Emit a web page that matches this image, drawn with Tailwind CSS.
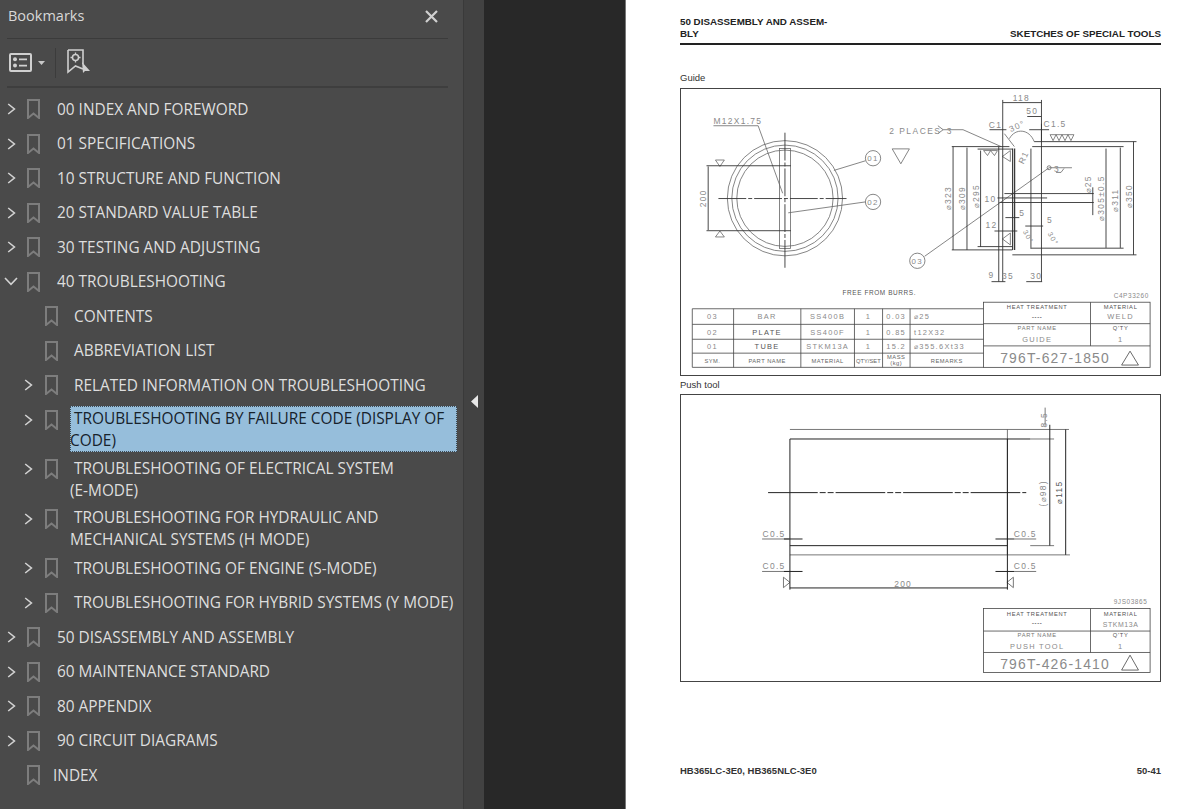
<!DOCTYPE html>
<html lang="en">
<head>
  <meta charset="UTF-8" />
  <title>Bookmarks</title>
  <script src="https://cdn.jsdelivr.net/npm/@tailwindcss/browser@4"></script>
</head>
<body class="w-[1200px] h-[809px] overflow-hidden bg-[#282828]">
  <!-- icon defs -->
  <svg class="hidden">
    <symbol id="mark" viewBox="0 0 13 20"><path d="M1 1H12V19L6.5 14.5L1 19Z" fill="none" stroke="#7d7d7d" stroke-width="2"/></symbol>
    <symbol id="chev" viewBox="0 0 9 12"><path d="M1.2 1L7.4 6L1.2 11" fill="none" stroke="#d2d2d2" stroke-width="1.6"/></symbol>
  </svg>

  <div class="flex h-full">
    <!-- Bookmarks panel -->
    <aside class="w-[463px] h-full bg-[#4a4a4a] text-[#dedede] font-['Open_Sans','Noto_Sans',sans-serif] text-[15.4px] shrink-0">
      <div class="ml-[7px] mr-[15px] h-[39px] border-b border-[#3b3b3b] flex items-center justify-between">
        <span class="ml-px -mt-[7px] text-[14.5px] text-[#d8d8d8]">Bookmarks</span>
        <svg class="w-[13px] h-[13px] mr-[10px] -mt-[6px]" viewBox="0 0 13 13"><path d="M1 1L12 12M12 1L1 12" stroke="#d0d0d0" stroke-width="2.2"/></svg>
      </div>
      <div class="ml-[7px] mr-[15px] h-[49px] border-b-2 border-[#3e3e3e] flex items-center">
        <svg class="w-[23px] h-[19px] ml-[2px]" viewBox="0 0 23 19"><rect x="1" y="1" width="21" height="17" rx="1" fill="none" stroke="#d0d0d0" stroke-width="2"/><circle cx="6" cy="6.3" r="2" fill="#d0d0d0"/><circle cx="6" cy="12.6" r="2" fill="#d0d0d0"/><path d="M10 6.3H18M10 12.6H18" stroke="#d0d0d0" stroke-width="1.8"/></svg>
        <svg class="w-[7px] h-[4px] ml-[6px]" viewBox="0 0 7 4"><path d="M0 0H7L3.5 4Z" fill="#c8c8c8"/></svg>
        <div class="w-px h-[30px] bg-[#3c3c3c] ml-[10px]"></div>
        <svg class="w-[23px] h-[25px] ml-[11px] -mt-[3px]" viewBox="0 0 23 25"><path d="M1 1H16V15M16 20L8.5 17L1 23V1" fill="none" stroke="#cfcfcf" stroke-width="1.6"/><circle cx="8.5" cy="8.5" r="3" fill="none" stroke="#cfcfcf" stroke-width="1.5"/><path d="M8.5 3.5V5M8.5 12V13.5M3.5 8.5H5M12 8.5H13.5" stroke="#cfcfcf" stroke-width="1.3"/><path d="M15 13L23 22H18L16 24Z" fill="#cfcfcf"/></svg>
      </div>

      <!-- tree -->
      <ul class="pt-[4px]">
        <li class="flex h-[34.5px] items-center"><svg class="w-[9px] h-[12px] ml-[7px]"><use href="#chev"/></svg><svg class="w-[13px] h-[20px] ml-[11px]"><use href="#mark"/></svg><span class="ml-[13px] pl-1">00 INDEX AND FOREWORD</span></li>
        <li class="flex h-[34.5px] items-center"><svg class="w-[9px] h-[12px] ml-[7px]"><use href="#chev"/></svg><svg class="w-[13px] h-[20px] ml-[11px]"><use href="#mark"/></svg><span class="ml-[13px] pl-1">01 SPECIFICATIONS</span></li>
        <li class="flex h-[34.5px] items-center"><svg class="w-[9px] h-[12px] ml-[7px]"><use href="#chev"/></svg><svg class="w-[13px] h-[20px] ml-[11px]"><use href="#mark"/></svg><span class="ml-[13px] pl-1">10 STRUCTURE AND FUNCTION</span></li>
        <li class="flex h-[34.5px] items-center"><svg class="w-[9px] h-[12px] ml-[7px]"><use href="#chev"/></svg><svg class="w-[13px] h-[20px] ml-[11px]"><use href="#mark"/></svg><span class="ml-[13px] pl-1">20 STANDARD VALUE TABLE</span></li>
        <li class="flex h-[34.5px] items-center"><svg class="w-[9px] h-[12px] ml-[7px]"><use href="#chev"/></svg><svg class="w-[13px] h-[20px] ml-[11px]"><use href="#mark"/></svg><span class="ml-[13px] pl-1">30 TESTING AND ADJUSTING</span></li>
        <li class="flex h-[34.5px] items-center"><svg class="w-[14px] h-[9px] ml-[4px]" viewBox="0 0 14 9"><path d="M1 1L7 7.4L13 1" fill="none" stroke="#d2d2d2" stroke-width="1.6"/></svg><svg class="w-[13px] h-[20px] ml-[9px]"><use href="#mark"/></svg><span class="ml-[13px] pl-1">40 TROUBLESHOOTING</span></li>

        <li class="flex h-[34.5px] items-center pl-[45px]"><svg class="w-[13px] h-[20px]"><use href="#mark"/></svg><span class="ml-[12px] pl-1">CONTENTS</span></li>
        <li class="flex h-[34.5px] items-center pl-[45px]"><svg class="w-[13px] h-[20px]"><use href="#mark"/></svg><span class="ml-[12px] pl-1">ABBREVIATION LIST</span></li>
        <li class="flex h-[34.5px] items-center"><svg class="w-[9px] h-[12px] ml-[24px]"><use href="#chev"/></svg><svg class="w-[13px] h-[20px] ml-[12px]"><use href="#mark"/></svg><span class="ml-[12px] pl-1">RELATED INFORMATION ON TROUBLESHOOTING</span></li>

        <li class="flex items-start">
          <svg class="w-[9px] h-[12px] ml-[24px] mt-[11px]"><use href="#chev"/></svg><svg class="w-[13px] h-[20px] ml-[12px] mt-[7px]"><use href="#mark"/></svg>
          <div class="ml-[12px] w-[387px] mt-[3px] leading-[22px] bg-[#96bedb] text-[#17222b] indent-1 outline-1 outline-dotted -outline-offset-1 outline-[#3c4a55] pt-[2.5px]">TROUBLESHOOTING BY FAILURE CODE (DISPLAY OF CODE)</div>
        </li>
        <li class="flex items-start">
          <svg class="w-[9px] h-[12px] ml-[24px] mt-[11px]"><use href="#chev"/></svg><svg class="w-[13px] h-[20px] ml-[12px] mt-[7px]"><use href="#mark"/></svg>
          <div class="ml-[12px] w-[387px] pt-[5.5px] leading-[22px] indent-1">TROUBLESHOOTING OF ELECTRICAL SYSTEM<br />(E-MODE)</div>
        </li>
        <li class="flex items-start">
          <svg class="w-[9px] h-[12px] ml-[24px] mt-[11px]"><use href="#chev"/></svg><svg class="w-[13px] h-[20px] ml-[12px] mt-[7px]"><use href="#mark"/></svg>
          <div class="ml-[12px] w-[387px] pt-[5.5px] leading-[22px] indent-1">TROUBLESHOOTING FOR HYDRAULIC AND MECHANICAL SYSTEMS (H MODE)</div>
        </li>
        <li class="flex h-[34.5px] items-center"><svg class="w-[9px] h-[12px] ml-[24px]"><use href="#chev"/></svg><svg class="w-[13px] h-[20px] ml-[12px]"><use href="#mark"/></svg><span class="ml-[12px] pl-1">TROUBLESHOOTING OF ENGINE (S-MODE)</span></li>
        <li class="flex h-[34.5px] items-center"><svg class="w-[9px] h-[12px] ml-[24px]"><use href="#chev"/></svg><svg class="w-[13px] h-[20px] ml-[12px]"><use href="#mark"/></svg><span class="ml-[12px] pl-1 whitespace-nowrap">TROUBLESHOOTING FOR HYBRID SYSTEMS (Y MODE)</span></li>

        <li class="flex h-[34.5px] items-center"><svg class="w-[9px] h-[12px] ml-[7px]"><use href="#chev"/></svg><svg class="w-[13px] h-[20px] ml-[11px]"><use href="#mark"/></svg><span class="ml-[13px] pl-1">50 DISASSEMBLY AND ASSEMBLY</span></li>
        <li class="flex h-[34.5px] items-center"><svg class="w-[9px] h-[12px] ml-[7px]"><use href="#chev"/></svg><svg class="w-[13px] h-[20px] ml-[11px]"><use href="#mark"/></svg><span class="ml-[13px] pl-1">60 MAINTENANCE STANDARD</span></li>
        <li class="flex h-[34.5px] items-center"><svg class="w-[9px] h-[12px] ml-[7px]"><use href="#chev"/></svg><svg class="w-[13px] h-[20px] ml-[11px]"><use href="#mark"/></svg><span class="ml-[13px] pl-1">80 APPENDIX</span></li>
        <li class="flex h-[34.5px] items-center"><svg class="w-[9px] h-[12px] ml-[7px]"><use href="#chev"/></svg><svg class="w-[13px] h-[20px] ml-[11px]"><use href="#mark"/></svg><span class="ml-[13px] pl-1">90 CIRCUIT DIAGRAMS</span></li>
        <li class="flex h-[34.5px] items-center pl-[27px]"><svg class="w-[13px] h-[20px]"><use href="#mark"/></svg><span class="ml-[13px]">INDEX</span></li>
      </ul>
    </aside>

    <!-- sash -->
    <div class="w-[21px] h-full bg-[#424242] border-l border-[#3a3a3a] flex items-center justify-center pb-[7px] shrink-0">
      <svg class="w-[7px] h-[13px]" viewBox="0 0 7 13"><path d="M7 0V13L0 6.5Z" fill="#e8e8e8"/></svg>
    </div>

    <!-- document area -->
    <div class="w-[142px] h-full bg-[#282828] border-r border-[#777] shrink-0"></div>

    <main class="flex-1 h-full bg-white pl-[54px] pr-[39px] font-['Liberation_Sans',Arial,sans-serif] text-black">
      <header class="pt-[16px] h-[45px] border-b-2 border-[#222] flex justify-between items-end pb-[3px] text-[9.8px] leading-[12px] font-bold text-[#222]">
        <span>50 DISASSEMBLY AND ASSEM-<br />BLY</span>
        <span>SKETCHES OF SPECIAL TOOLS</span>
      </header>

      <p class="mt-[27px] h-[16px] text-[9.5px] leading-[12px] text-[#333]">Guide</p>

      <!-- Guide drawing -->
      <svg class="block w-[481px] h-[288px] border border-[#444] box-border" viewBox="680 88 481 288" font-family="Liberation Sans, sans-serif" font-size="8.5" letter-spacing="1.3" fill="#8a8a8a">
        <g fill="none" stroke="#666" stroke-width="0.8">
          <circle cx="784" cy="198" r="58"/><circle cx="784" cy="198" r="53.5"/><circle cx="784" cy="198" r="48.5"/>
          <rect x="778.5" y="148" width="11" height="100.5"/>
          <circle cx="872.7" cy="157.7" r="7.7"/><circle cx="872.7" cy="201.7" r="7.7"/><circle cx="917.3" cy="261" r="7.7"/>
          <path d="M712 125H757L781.7 193M865 160.3L833.3 170M865 201.7L787.3 212.7"/>
          <path d="M714 159.5H723L718.5 166ZM714 237H723L718.5 231ZM892 148.3H909.3L900.7 163.3Z"/>
          <path d="M1050 167.3H1073M1050 167.3L924.6 256.5M1057 172H1062M1062 172L1065 168"/>
          <circle cx="1050" cy="167.3" r="2"/>
          <path d="M943.3 129H963.3L1001.7 146M938 125L943.3 129L938 133"/>
          <path d="M1005 133L1015 146M1010 138C1016 127 1030 128 1035 141"/>
          <path d="M1051 134H1075L1072 140L1069 134L1066 140L1063 134L1060 140L1057 134L1054 140L1051 134M984 150H998L995 155L991 150L988 155Z"/>
          <path d="M1003 156L1011 150V161ZM1003 239L1011 233V245Z"/>
        </g>
        <g fill="none" stroke="#333" stroke-width="0.9">
          <path d="M784 132V268M717 198.3H846" stroke-dasharray="28 2 4 2"/>
          <path d="M705 165.3H790M705 230.7H790M706.7 166V230"/>
          <path d="M1003.3 99V282M1042.3 99V282M999.3 146V282M1031.7 148V249"/>
          <path d="M1013.3 148V250M1015.3 148V250" stroke-width="1.2"/>
          <path d="M1035 141H1138M952 146H1010M1033 146H1125M978 148.5H1013M978 246.7H1013M1032 248.3H1125M952 250H1013M1013 255H1138"/>
          <path d="M953.3 146V250M967.3 147V250M981 150V247M1107.3 148V248M1121.7 147V248M1135 141V255"/>
          <path d="M1003.3 101.7H1042.3M1028 115.7H1042M990 129H1007M1030 129H1050M1042.3 123V141"/>
          <path d="M998 197.7H1048M1005 193.3H1095M1000 202.3H1095M1094 187V215"/>
          <path d="M1006 217.5H1020M1026 226H1044M995 231H1018M992 282H1006M1027 282H1043"/>
        </g>
        <text x="712" y="123">M12X1.75</text>
        <text x="889" y="133" letter-spacing="1.5">2 PLACES</text>
        <text transform="translate(705 198) rotate(-90)" text-anchor="middle">200</text>
        <g text-anchor="middle" font-size="8"><text x="872.7" y="160.5">01</text><text x="872.7" y="204.5">02</text><text x="917.3" y="264">03</text></g>
        <g text-anchor="middle">
          <text x="1022" y="100">118</text><text x="1033" y="113">50</text><text x="996" y="127">C1</text><text x="1056" y="126">C1.5</text>
          <text x="1058" y="172">3</text><text x="950" y="133">3</text>
          <text transform="translate(1019 128) rotate(-25)">30°</text>
          <text transform="translate(1027 158) rotate(-65)">R1</text>
          <text x="991" y="202">10</text><text x="1023" y="216">5</text><text x="1051" y="223">5</text><text x="992" y="228">12</text>
          <text x="992" y="278">9</text><text x="1008.5" y="279">35</text><text x="1037" y="279">30</text>
          <text transform="translate(951 198) rotate(-90)">⌀323</text>
          <text transform="translate(965 198) rotate(-90)">⌀309</text>
          <text transform="translate(979 196) rotate(-90)">⌀295</text>
          <text transform="translate(1092 184) rotate(-90)">⌀25</text>
          <text transform="translate(1105 198) rotate(-90)">⌀305±0.5</text>
          <text transform="translate(1119 200) rotate(-90)">⌀311</text>
          <text transform="translate(1133 196) rotate(-90)">⌀350</text>
          <text transform="translate(1027 238) rotate(60)" font-size="7">30°</text>
          <text transform="translate(1052 240) rotate(60)" font-size="7">30°</text>
        </g>
        <text x="842" y="295" font-size="6.5" letter-spacing="0.6" fill="#555">FREE FROM BURRS.</text>
        <text x="1115" y="298" font-size="6.5" letter-spacing="0.6">C4P33260</text>

        <!-- parts table -->
        <g fill="none" stroke="#444" stroke-width="0.8">
          <path d="M690.7 309.3H984M690.7 325H984M690.7 340H984M690.7 354H984M690.7 368.3H984M690.7 309.3V368.3M732.3 309.3V368.3M800 309.3V368.3M854 309.3V368.3M882.3 309.3V368.3M910 309.3V368.3"/>
          <rect x="984" y="302.7" width="167.7" height="65.6"/>
          <path d="M1091.7 302.7V346.7M984 324.3H1151.7M984 346.7H1151.7M1123 366L1131.5 352L1140 366Z"/>
        </g>
        <g text-anchor="middle" font-size="7.5">
          <text x="711" y="320">03</text><text x="766" y="320">BAR</text><text x="827" y="320">SS400B</text><text x="868" y="320">1</text><text x="896" y="320">0.03</text>
          <text x="711" y="335.5">02</text><text x="766" y="335.5" fill="#555">PLATE</text><text x="827" y="335.5">SS400F</text><text x="868" y="335.5">1</text><text x="896" y="335.5">0.85</text>
          <text x="711" y="350">01</text><text x="766" y="350" fill="#555">TUBE</text><text x="827" y="350">STKM13A</text><text x="868" y="350">1</text><text x="896" y="350">15.2</text>
          <g font-size="5.8" letter-spacing="0.5" fill="#666"><text x="711" y="363.5">SYM.</text><text x="766" y="363.5">PART NAME</text><text x="827" y="363.5">MATERIAL</text><text x="868" y="363.5" letter-spacing="0">QTY/SET</text><text x="896" y="360">MASS</text><text x="896" y="366">(kg)</text><text x="947" y="363.5">REMARKS</text></g>
          <g font-size="5.8" letter-spacing="0.7" fill="#555"><text x="1038" y="310">HEAT TREATMENT</text><text x="1122" y="310">MATERIAL</text><text x="1038" y="320" font-weight="bold">----</text><text x="1038" y="331" fill="#777">PART NAME</text><text x="1122" y="331">Q'TY</text></g>
          <text x="1122" y="320">WELD</text><text x="1038" y="343">GUIDE</text><text x="1122" y="343">1</text>
          <text x="1056" y="364" font-size="14" letter-spacing="1.2">796T-627-1850</text>
        </g>
        <text x="914" y="320" font-size="7.5">⌀25</text><text x="914" y="335.5" font-size="7.5">t12X32</text><text x="914" y="350" font-size="7.5">⌀355.6Xt33</text>
      </svg>

      <p class="h-[18px] pt-[3px] text-[9.5px] leading-[12px] text-[#333]">Push tool</p>

      <!-- Push tool drawing -->
      <svg class="block w-[481px] h-[288px] border border-[#444] box-border" viewBox="680 394 481 288" font-family="Liberation Sans, sans-serif" font-size="8.5" letter-spacing="1.3" fill="#8a8a8a">
        <g fill="none" stroke="#555" stroke-width="0.8">
          <path d="M789 428.7H1070M789 555H1071M1008 428.7V555"/>
          <path d="M1046 406.7V425"/>
          <path d="M1031 438.3H1055M1031 545.7H1055"/>
          <path d="M761 539H788M1015 539H1037M761 571.7H788M1015 571.7H1037"/>
          <path d="M782.5 577.5L789 582.7L782.5 588ZM1014 577.5L1007.5 582.7L1014 588Z"/>
          <rect x="984" y="609" width="167.7" height="64.5" stroke="#444"/>
          <path d="M1091.7 609V653.3M984 631.7H1151.7M984 653.3H1151.7M1123 671L1131.5 656L1140 671Z" stroke="#444"/>
        </g>
        <g fill="none" stroke="#222" stroke-width="1">
          <path d="M789 438.3H1031M789 545.7H1008M789 438.3V590M1008 438.3V590"/>
          <path d="M767 492.3H1027" stroke-dasharray="50 2 6 2 6 2"/>
          <path d="M1050.7 424V545.7M1066.7 428.7V555M789 588.3H1008"/>
          <path d="M783 539H801.7M996 539H1015M783 571.7H801.7M996 571.7H1015"/>
        </g>
        <g text-anchor="middle">
          <text transform="translate(1048 419) rotate(-90)">8.5</text>
          <text transform="translate(1047 493) rotate(-90)">(⌀98)</text>
          <text transform="translate(1063 492) rotate(-90)" fill="#555">⌀115</text>
          <text x="903" y="587">200</text>
          <text x="773" y="537">C0.5</text><text x="1026" y="537">C0.5</text><text x="773" y="569.5">C0.5</text><text x="1026" y="569.5">C0.5</text>
          <g font-size="5.8" letter-spacing="0.7" fill="#555"><text x="1038" y="616.5">HEAT TREATMENT</text><text x="1122" y="616.5">MATERIAL</text><text x="1038" y="626" font-weight="bold">----</text><text x="1038" y="638" fill="#777">PART NAME</text><text x="1122" y="638">Q'TY</text></g>
          <text x="1122" y="628" font-size="7" letter-spacing="0.6">STKM13A</text><text x="1038" y="650" font-size="7.5">PUSH TOOL</text><text x="1122" y="650" font-size="7.5">1</text>
          <text x="1056" y="670" font-size="14" letter-spacing="1.2">796T-426-1410</text>
        </g>
        <text x="1115" y="604" font-size="6.5" letter-spacing="0.6">9JS03865</text>
      </svg>

      <footer class="mt-[83px] flex justify-between text-[9.5px] leading-[12px] font-bold text-[#333]">
        <span>HB365LC-3E0, HB365NLC-3E0</span>
        <span>50-41</span>
      </footer>
    </main>
  </div>
</body>
</html>
